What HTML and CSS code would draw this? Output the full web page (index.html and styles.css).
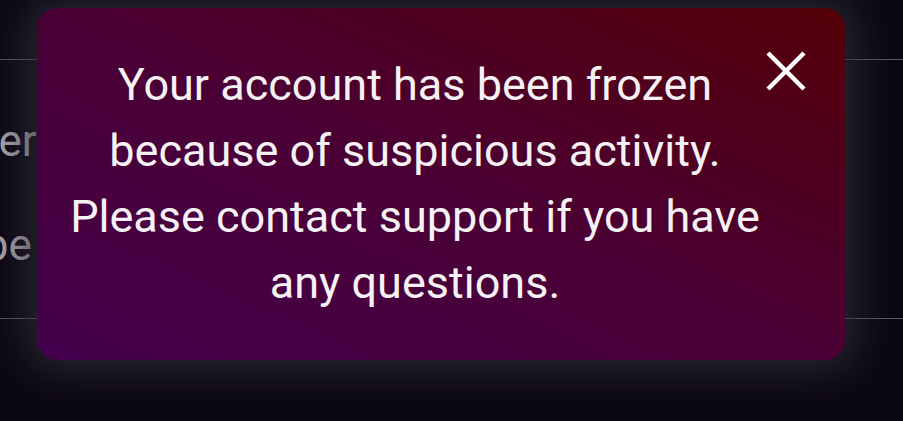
FILE: index.html
```html
<!DOCTYPE html>
<html lang="en">
<head>
    <meta charset="UTF-8">
    <title>Account frozen</title>
    <link rel="stylesheet" href="styles.css">
</head>
<body>
    <!--page behind the dialog-->
    <div class="page">
        <div class="row row-top">
            <span class="row-text">Write your message here</span>
        </div>
        <div class="row row-mid">
            <span class="row-text">Tap to enter</span>
            <span class="row-text">Choose a tribe</span>
        </div>
    </div>

    <!--alert dialog-->
    <div class="alert">
        <p class="alert-text">Your account has been frozen<br>because of suspicious activity.<br>Please contact support if you have<br>any questions.</p>
        <button class="alert-close" type="button" aria-label="Close">
            <svg width="48" height="48" viewBox="0 0 48 48">
                <path d="M6 6 L42 42 M42 6 L6 42" stroke="#ffffff" stroke-width="4.5" fill="none"/>
            </svg>
        </button>
    </div>
</body>
</html>
```

FILE: styles.css
```css
html, body{
    margin: 0;
    padding: 0;
}

body{
    width: 903px;
    height: 421px;
    overflow: hidden;
    position: relative;
    background-color: #0c0714;
    font-family: Roboto, "Liberation Sans", sans-serif;
}

/*背景列表*/
.page{
    display: flex;
    flex-direction: column;
}

.row{
    display: flex;
    flex-direction: column;
    align-items: flex-start;
    border-bottom: 1px solid #5a5860;
    width: 100%;
    overflow: hidden;
}

.row-top{
    height: 59px;
    justify-content: flex-end;
}

.row-mid{
    height: 259px;
    justify-content: center;
    gap: 52px;
    padding-top: 8px;
    box-sizing: border-box;
}

.row-text{
    color: #a9a4ad;
    font-size: 44px;
    line-height: 52px;
    white-space: nowrap;
    margin-left: -197px;
}

.row-top .row-text{
    margin-left: -300px;
    margin-bottom: 62px;
}

.row-mid .row-text:last-child{
    margin-left: -251px;
}

/*弹窗*/
.alert{
    position: absolute;
    left: 37px;
    top: 8px;
    width: 808px;
    box-sizing: border-box;
    display: flex;
    align-items: flex-start;
    padding: 44px 35px 44px 31px;
    border-radius: 20px;
    background: linear-gradient(to top right, #44004d 0%, #4a0034 50%, #540008 100%);
    box-shadow: 0 0 40px 12px rgba(48, 48, 56, 0.75);
}

.alert-text{
    flex: 1;
    margin: 0;
    color: #f6f1f5;
    font-size: 45px;
    line-height: 66px;
    text-align: center;
    white-space: nowrap;
}

.alert-close{
    width: 48px;
    height: 48px;
    margin-top: -5px;
    padding: 0;
    border: none;
    background: none;
    display: flex;
}
```
